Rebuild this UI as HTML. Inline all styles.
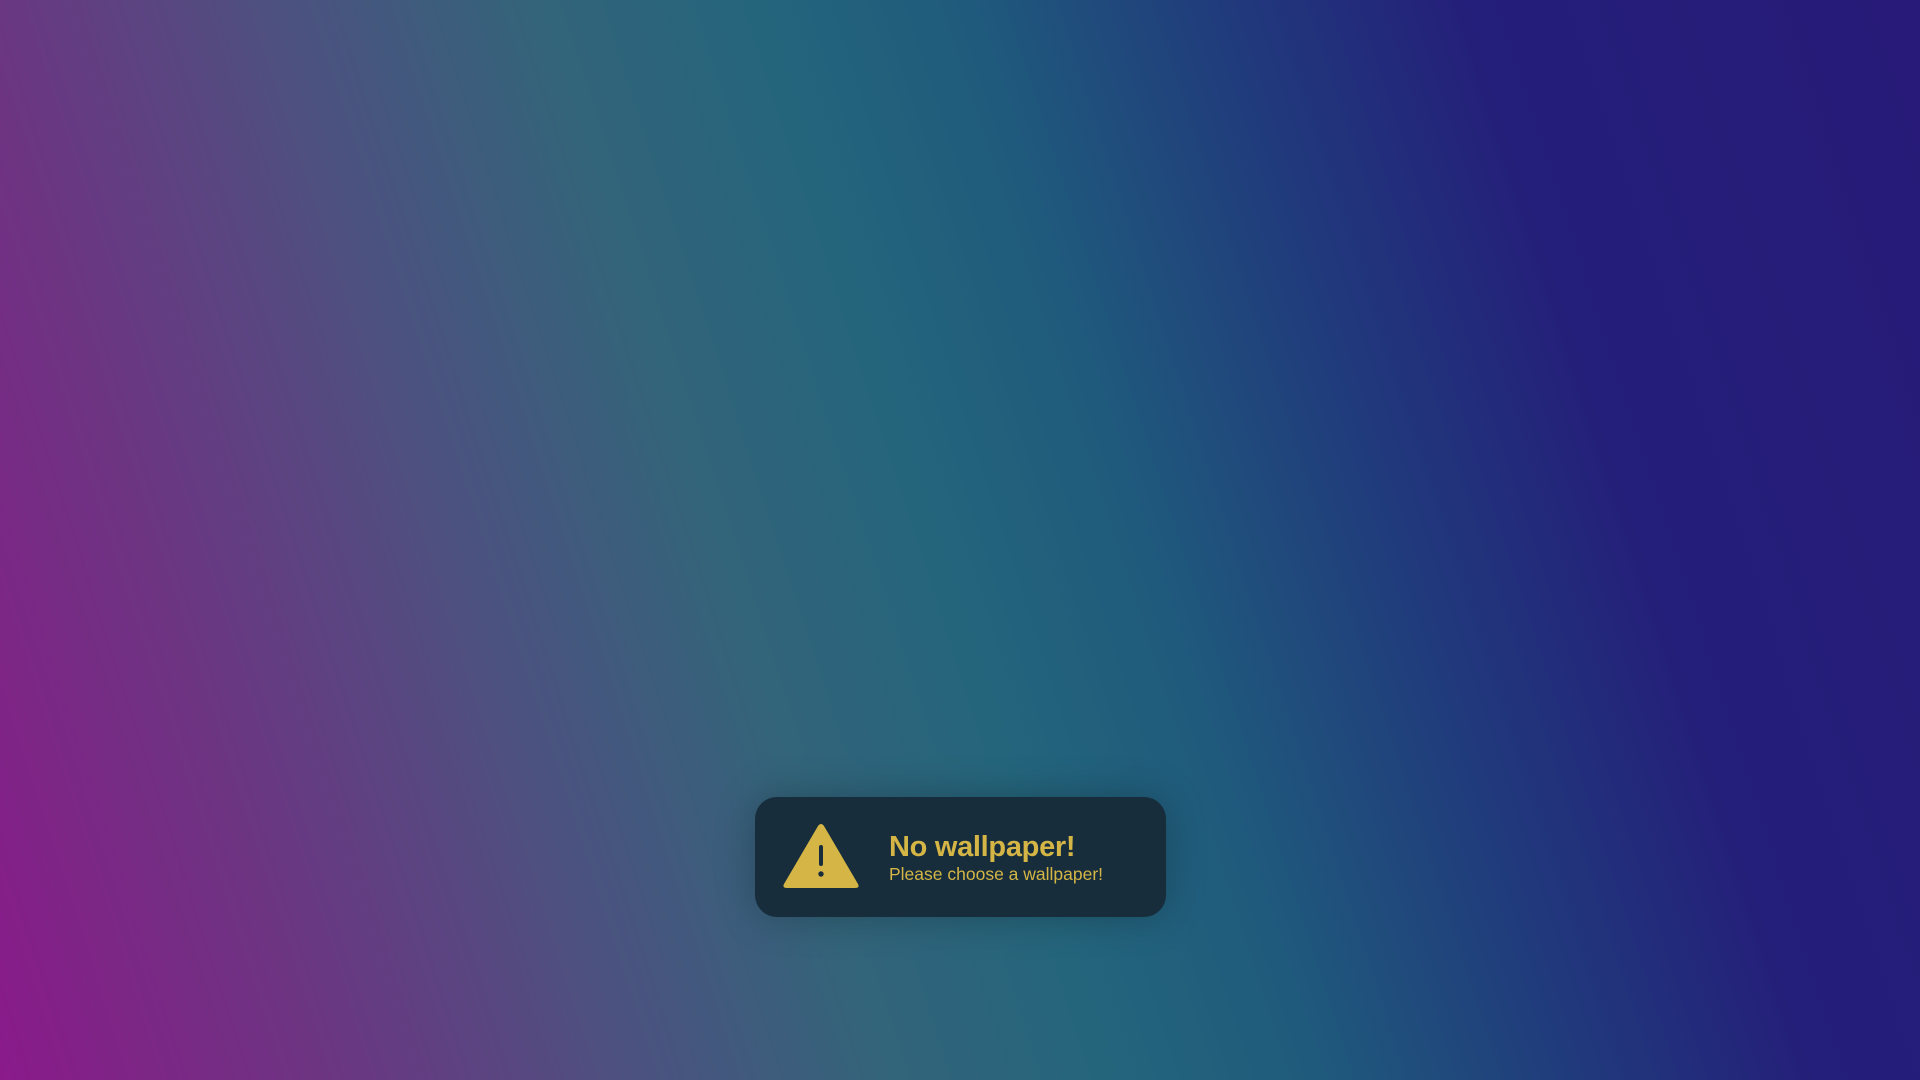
<!DOCTYPE html>
<html><head><meta charset="utf-8"><style>
html,body{margin:0;width:1920px;height:1080px;overflow:hidden;}
body{background:linear-gradient(72deg,#8a1a8a 0%,#6d3482 14%,#4e5080 27%,#33647a 39%,#24657c 49%,#1f5a7c 58%,#203e7c 68%,#241f7a 80%,#271a78 100%);position:relative;font-family:"Liberation Sans",sans-serif;}
.toast{position:absolute;left:755px;top:797px;width:411px;height:120px;border-radius:22px;background:#172d3b;box-shadow:0 0 40px rgba(0,0,0,0.25);}
.t1{position:absolute;left:134px;top:34px;font-size:29px;font-weight:bold;color:#d4b545;letter-spacing:-0.3px;}
.t2{position:absolute;left:134px;top:67px;font-size:17.5px;color:#d4b545;}
svg{position:absolute;left:28px;top:26px;}
</style></head><body>
<div class="toast">
<svg width="76" height="66" viewBox="0 0 76 66"><path d="M35 3 Q38 -1 41 3 L75 61 Q77 65 72 65 L4 65 Q-1 65 1 61 Z" fill="#d4b545"/><rect x="36" y="22" width="4" height="21" rx="2" fill="#172d3b"/><circle cx="38" cy="51" r="2.7" fill="#172d3b"/></svg>
<div class="t1">No wallpaper!</div>
<div class="t2">Please choose a wallpaper!</div>
</div>
</body></html>
